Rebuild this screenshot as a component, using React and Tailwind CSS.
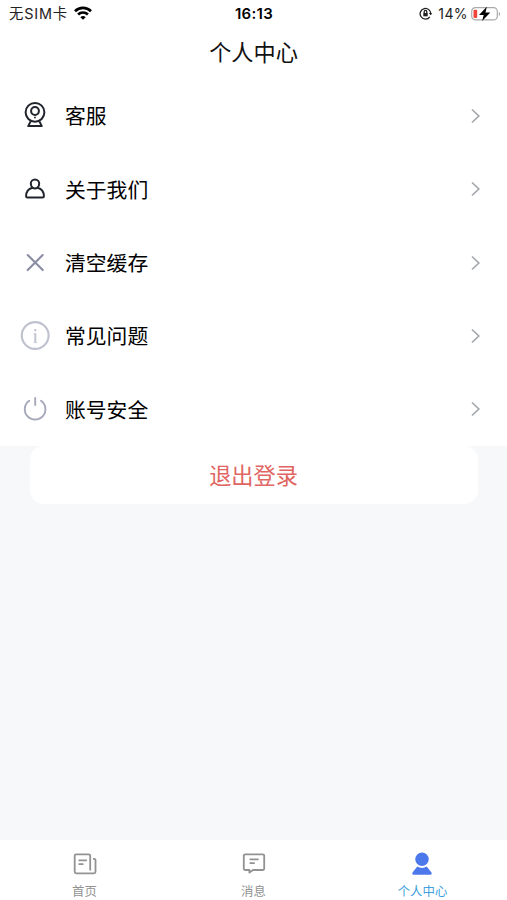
const menuItems = [
  { label: '客服', icon: <CameraIcon /> },
  { label: '关于我们', icon: <PersonIcon /> },
  { label: '清空缓存', icon: <CloseIcon /> },
  { label: '常见问题', icon: <InfoIcon /> },
  { label: '账号安全', icon: <PowerIcon /> },
];

const tabs = [
  { label: '首页', icon: <NewsIcon /> },
  { label: '消息', icon: <MessageIcon /> },
  { label: '个人中心', icon: <UserIcon />, active: true },
];

function CameraIcon() {
  return (
    <svg className="size-[30px]" viewBox="0 0 30 30" fill="none" stroke="#20242c" strokeWidth="2" strokeLinejoin="round">
      <circle cx="15" cy="11.3" r="9.4" />
      <circle cx="15" cy="10" r="3.9" />
      <circle cx="15" cy="16.5" r="0.9" fill="#20242c" stroke="none" />
      <path d="M10.6 20.4 8.2 25.1h13.6l-2.4-4.7" />
    </svg>
  );
}

function PersonIcon() {
  return (
    <svg className="size-[30px]" viewBox="0 0 30 30" fill="none" stroke="#20242c" strokeWidth="2" strokeLinejoin="round">
      <path d="M12.5 13.7C11.3 12.7 10.8 11.300 10.8 9.6a4.200 4.200 0 0 1 8.400 0c0 1.700-.5 3.100-1.700 4.100 3.900 1 6.400 4.200 6.400 8.500 0 .9-.5 1.400-1.300 1.400H7.400c-.8 0-1.300-.5-1.300-1.400 0-4.300 2.500-7.500 6.400-8.500Z" />
      <path d="M12.500 13.700c1.500.9 3.500.9 5 0" />
    </svg>
  );
}

function CloseIcon() {
  return (
    <svg className="size-[30px]" viewBox="0 0 30 30" fill="none" stroke="#8b8da5" strokeWidth="2.1" strokeLinecap="round">
      <path d="m7.7 7.1 15 15M22.7 7.1l-15 15" />
    </svg>
  );
}

function InfoIcon() {
  return (
    <svg className="size-[30px]" viewBox="0 0 30 30" fill="none" stroke="#bfc1ce" strokeWidth="2.1">
      <circle cx="15.2" cy="14.5" r="13.4" />
      <path d="M15.3 8v2.200M15.300 12.300v9.200" strokeWidth="1.900" />
      <path d="M13.500 12.700h1.800M13.500 21.600h3.600" strokeWidth="0.700" />
    </svg>
  );
}

function PowerIcon() {
  return (
    <svg className="size-[30px]" viewBox="0 0 30 30" fill="none" stroke="#a6a8bb" strokeWidth="1.900" strokeLinecap="round">
      <path d="M9.200 6.800a10.300 10.300 0 1 0 11.800 0" />
      <path d="M15.200 4v7" />
    </svg>
  );
}

function NewsIcon() {
  return (
    <svg className="size-7" viewBox="0 0 28 28" fill="none" stroke="#929292" strokeWidth="1.800" strokeLinejoin="round">
      <path d="M19.200 20.500V5.800a1.500 1.500 0 0 0-1.500-1.500H5.200a1.500 1.500 0 0 0-1.500 1.500v16a1.500 1.500 0 0 0 1.500 1.500h17.800a1.500 1.500 0 0 0 1.500-1.500V10.300a1.500 1.500 0 0 0-1.500-1.500h-1" />
      <path d="M7.500 10.300h8.400M7.500 14.100h5" />
    </svg>
  );
}

function MessageIcon() {
  return (
    <svg className="size-7" viewBox="0 0 28 28" fill="none" stroke="#929292" strokeWidth="1.800" strokeLinejoin="round">
      <path d="M5.300 4.300h17.400a1.500 1.500 0 0 1 1.500 1.500v12.700a1.500 1.500 0 0 1-1.500 1.500H13l-3.600 2.600V20H5.300a1.500 1.500 0 0 1-1.500-1.500V5.800a1.500 1.500 0 0 1 1.500-1.500Z" />
      <path d="M9.600 9.300h9M9.600 13.100h5.200" />
    </svg>
  );
}

function UserIcon() {
  return (
    <svg className="mr-[2px] size-7" viewBox="0 0 28 28" fill="#4c78ec">
      <circle cx="14" cy="9.300" r="6.700" />
      <path d="M9.300 16.500c2.700 1.900 6.700 1.900 9.400 0l4.600 5.800c.9 1.200.4 2.500-1 2.500H5.700c-1.400 0-1.900-1.300-1-2.500Z" />
    </svg>
  );
}

function StatusBar() {
  return (
    <div className="grid h-7 grid-cols-3 items-center pr-1.5 pl-[9px] text-[14px] text-[#222]">
      <div className="flex items-center gap-[6px]">
        <span className="whitespace-nowrap text-[14.4px] tracking-[0.8px]">无SIM卡</span>
        <svg className="mb-[2px] h-[14px] w-[18px]" viewBox="0 0 18 14" fill="none" stroke="#000" strokeWidth="2.700">
          <path d="M1 5.200a11.500 11.500 0 0 1 16 0M4.100 8.500a7 7 0 0 1 9.800 0" />
          <path d="M9 13.700 6.300 11.200a4 4 0 0 1 5.400 0Z" fill="#000" stroke="none" />
        </svg>
      </div>
      <div className="mr-[2px] text-center text-[15px] font-semibold tracking-[0.3px] text-black">16:13</div>
      <div className="flex items-center justify-end pb-px">
        <svg className="mr-[6px] size-[13px]" viewBox="0 0 13 13" fill="none" stroke="#222" strokeWidth="1.300">
          <path d="M10.800 9.800a5.300 5.300 0 1 1 .9-2.300" />
          <path d="m9.800 6 1.900 2.300L13 6Z" fill="#222" stroke="none" />
          <path d="M4.300 6h4.400v3.300H4.300Z" fill="#222" stroke="none" />
          <path d="M5.200 6V4.700a1.300 1.300 0 0 1 2.600 0V6" />
        </svg>
        <span className="mr-[3px] tracking-[0.4px]">14%</span>
        <svg className="h-[16px] w-[30px]" viewBox="0 0 30 16">
          <rect x="0.700" y="1.700" width="25.600" height="12.200" rx="3.700" fill="#fff" stroke="#aaa" strokeWidth="1.200" />
          <path d="M27.800 6v4c1.800-.7 1.800-3.300 0-4Z" fill="#aaa" />
          <rect x="2.500" y="3.700" width="3.700" height="8.200" rx="1" fill="#f0453a" />
          <path d="M15.800.8 8 8.900h4.700l-1.600 6.200 8.200-8.500h-4.800Z" fill="#000" />
        </svg>
      </div>
    </div>
  );
}

function App() {
  return (
    <div className="flex h-[900px] w-[507px] flex-col bg-[#f6f8fa] font-['Inter','Noto_Sans_CJK_SC',sans-serif]">
      <header className="bg-white">
        <StatusBar />
        <h1 className="flex h-[51px] items-start justify-center pt-2 text-[22.2px] leading-[33px] text-[#111]">个人中心</h1>
      </header>

      <ul className="flex h-[367px] flex-col bg-white">
        {menuItems.map((item) => (
          <li key={item.label} className="flex flex-1 items-center pr-[26px] pl-5">
            {item.icon}
            <span className="ml-[15px] flex-1 pt-[3px] text-[20.8px] leading-[30px] text-black">{item.label}</span>
            <svg className="h-4 w-[10px]" viewBox="0 0 10 16" fill="none" stroke="#a5a8ad" strokeWidth="1.700">
              <path d="m1 1.500 6.800 6.500L1 14.500" />
            </svg>
          </li>
        ))}
      </ul>

      <button className="mr-[29px] ml-[30px] h-[58px] rounded-[14px] bg-white pt-[2px] pr-px text-[22.2px] text-[#df6663]">退出登录</button>

      <nav className="mt-auto grid h-[60px] grid-cols-3 bg-white">
        {tabs.map((tab) => (
          <div key={tab.label} className="flex flex-col items-center pt-[10px]">
            {tab.icon}
            <span className={tab.active ? 'mt-[5px] text-[12.4px] leading-[18px] text-[#409fdc]' : 'mt-[5px] text-[12.4px] leading-[18px] text-[#929292]'}>
              {tab.label}
            </span>
          </div>
        ))}
      </nav>
    </div>
  );
}

export default App;
